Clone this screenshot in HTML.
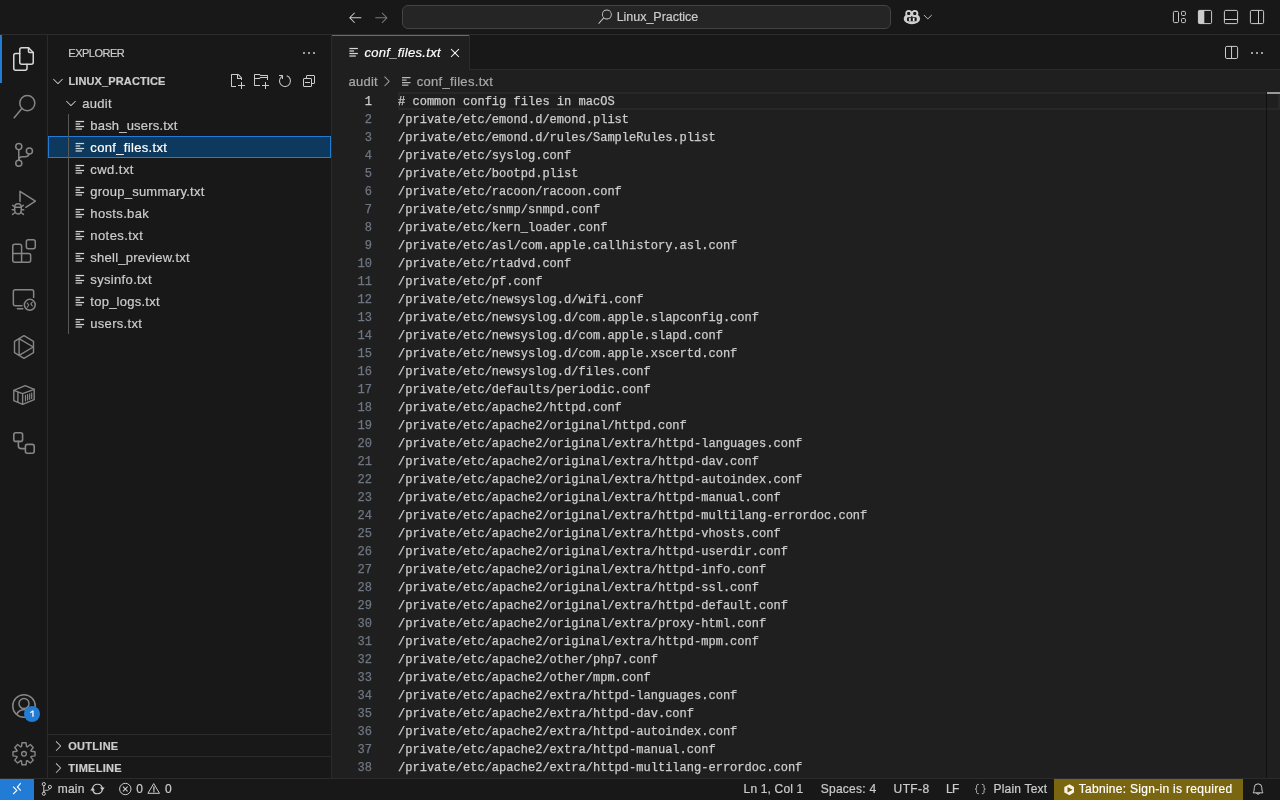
<!DOCTYPE html>
<html>
<head>
<meta charset="utf-8">
<title>conf_files.txt - Linux_Practice</title>
<style>
*{box-sizing:border-box;margin:0;padding:0}
html,body{width:1280px;height:800px;overflow:hidden;background:#181818;font-family:"Liberation Sans",sans-serif;font-size:13px;color:#cccccc}
svg{display:block;overflow:visible;position:absolute}
.t{position:absolute;white-space:pre;-webkit-text-stroke:0.2px currentColor}
.box{position:absolute}
#title{position:absolute;left:0;top:0;width:1280px;height:35px;background:#181818;border-bottom:1px solid #2b2b2b}
#cmd{position:absolute;left:402px;top:5px;width:489px;height:24px;background:#252525;border:1px solid #434343;border-radius:6px}
#act{position:absolute;left:0;top:35px;width:48px;height:743px;background:#181818;border-right:1px solid #2b2b2b}
#side{position:absolute;left:48px;top:35px;width:284px;height:743px;background:#181818;border-right:1px solid #2b2b2b}
#tabs{position:absolute;left:332px;top:35px;width:948px;height:35px;background:#181818;border-bottom:1px solid #2b2b2b}
#tab{position:absolute;left:0;top:0;width:138px;height:35px;background:#1f1f1f;border-right:1px solid #2b2b2b}
#tab i{position:absolute;left:0;top:0;width:137px;height:1px;background:#227bd5}
#crumbs{position:absolute;left:332px;top:70px;width:948px;height:22px;background:#1f1f1f}
#ed{position:absolute;left:332px;top:92px;width:948px;height:686px;background:#1f1f1f;overflow:hidden}
#ed pre{position:absolute;top:0.6px;will-change:transform;-webkit-text-stroke:0.25px currentColor;margin:0;font-family:"Liberation Mono",monospace;font-size:12.04px;line-height:18px;white-space:pre}
#nums{left:0;width:40px;text-align:right;color:#6e7681}
#nums b{font-weight:normal;color:#cccccc}
#code{left:66px;color:#cccccc}
#txt{position:absolute;left:0;top:0;width:1280px;height:800px;will-change:transform}
#status{position:absolute;left:0;top:778px;width:1280px;height:22px;background:#181818;border-top:1px solid #2b2b2b}
</style>
</head>
<body>
<div id="title"><div id="cmd"></div></div>
<div id="act"></div>
<div id="side"></div>
<div id="tabs"><div id="tab"><i></i></div></div>
<div id="crumbs"></div>
<div id="ed"><div class="box" style="left:66px;top:0;width:882px;height:18px;border:2px solid #282828"></div><div class="box" style="left:934px;top:0;width:1px;height:686px;background:#111111"></div><div class="box" style="left:935px;top:0.4px;width:13px;height:1.8px;background:#9a9a9a"></div><pre id="nums"><b>1</b>
2
3
4
5
6
7
8
9
10
11
12
13
14
15
16
17
18
19
20
21
22
23
24
25
26
27
28
29
30
31
32
33
34
35
36
37
38
39</pre><pre id="code"># common config files in macOS
/private/etc/emond.d/emond.plist
/private/etc/emond.d/rules/SampleRules.plist
/private/etc/syslog.conf
/private/etc/bootpd.plist
/private/etc/racoon/racoon.conf
/private/etc/snmp/snmpd.conf
/private/etc/kern_loader.conf
/private/etc/asl/com.apple.callhistory.asl.conf
/private/etc/rtadvd.conf
/private/etc/pf.conf
/private/etc/newsyslog.d/wifi.conf
/private/etc/newsyslog.d/com.apple.slapconfig.conf
/private/etc/newsyslog.d/com.apple.slapd.conf
/private/etc/newsyslog.d/com.apple.xscertd.conf
/private/etc/newsyslog.d/files.conf
/private/etc/defaults/periodic.conf
/private/etc/apache2/httpd.conf
/private/etc/apache2/original/httpd.conf
/private/etc/apache2/original/extra/httpd-languages.conf
/private/etc/apache2/original/extra/httpd-dav.conf
/private/etc/apache2/original/extra/httpd-autoindex.conf
/private/etc/apache2/original/extra/httpd-manual.conf
/private/etc/apache2/original/extra/httpd-multilang-errordoc.conf
/private/etc/apache2/original/extra/httpd-vhosts.conf
/private/etc/apache2/original/extra/httpd-userdir.conf
/private/etc/apache2/original/extra/httpd-info.conf
/private/etc/apache2/original/extra/httpd-ssl.conf
/private/etc/apache2/original/extra/httpd-default.conf
/private/etc/apache2/original/extra/proxy-html.conf
/private/etc/apache2/original/extra/httpd-mpm.conf
/private/etc/apache2/other/php7.conf
/private/etc/apache2/other/mpm.conf
/private/etc/apache2/extra/httpd-languages.conf
/private/etc/apache2/extra/httpd-dav.conf
/private/etc/apache2/extra/httpd-autoindex.conf
/private/etc/apache2/extra/httpd-manual.conf
/private/etc/apache2/extra/httpd-multilang-errordoc.conf
/private/etc/apache2/extra/httpd-ssl.conf</pre></div>
<div id="status"></div>
<div class="box" style="left:0px;top:35px;width:2px;height:48px;background:#227bd5;"></div>
<div class="box" style="left:48px;top:136px;width:283px;height:22px;background:#0c395d;border:1px solid #227bd5;"></div>
<div class="box" style="left:48px;top:734px;width:283px;height:1px;background:#2b2b2b;"></div>
<div class="box" style="left:48px;top:756px;width:283px;height:1px;background:#2b2b2b;"></div>
<div class="box" style="left:0px;top:779px;width:34px;height:21px;background:#227bd5;"></div>
<div class="box" style="left:1054px;top:779px;width:189px;height:21px;background:#7a6510;"></div>
<div id="txt"><span class="t" style="left:616.7px;top:5.60px;height:22px;line-height:22px;font-size:12.5px;color:#cccccc;letter-spacing:-0.031px;">Linux_Practice</span>
<span class="t" style="left:68.3px;top:42.40px;height:22px;line-height:22px;font-size:11px;color:#cccccc;letter-spacing:-0.489px;">EXPLORER</span>
<span class="t" style="left:68.4px;top:69.80px;height:22px;line-height:22px;font-size:11px;color:#cccccc;font-weight:bold;letter-spacing:0.127px;">LINUX_PRACTICE</span>
<span class="t" style="left:82.2px;top:92.80px;height:22px;line-height:22px;font-size:13px;color:#cccccc;letter-spacing:0.299px;">audit</span>
<span class="t" style="left:90.3px;top:114.80px;height:22px;line-height:22px;font-size:13px;color:#cccccc;letter-spacing:0.189px;">bash_users.txt</span>
<span class="t" style="left:90.3px;top:136.80px;height:22px;line-height:22px;font-size:13px;color:#ffffff;letter-spacing:0.333px;">conf_files.txt</span>
<span class="t" style="left:90.3px;top:158.80px;height:22px;line-height:22px;font-size:13px;color:#cccccc;letter-spacing:0.455px;">cwd.txt</span>
<span class="t" style="left:90.3px;top:180.80px;height:22px;line-height:22px;font-size:13px;color:#cccccc;letter-spacing:0.231px;">group_summary.txt</span>
<span class="t" style="left:90.3px;top:202.80px;height:22px;line-height:22px;font-size:13px;color:#cccccc;letter-spacing:0.355px;">hosts.bak</span>
<span class="t" style="left:90.3px;top:224.80px;height:22px;line-height:22px;font-size:13px;color:#cccccc;letter-spacing:0.420px;">notes.txt</span>
<span class="t" style="left:90.3px;top:246.80px;height:22px;line-height:22px;font-size:13px;color:#cccccc;letter-spacing:0.251px;">shell_preview.txt</span>
<span class="t" style="left:90.3px;top:268.80px;height:22px;line-height:22px;font-size:13px;color:#cccccc;letter-spacing:0.340px;">sysinfo.txt</span>
<span class="t" style="left:90.3px;top:290.80px;height:22px;line-height:22px;font-size:13px;color:#cccccc;letter-spacing:0.255px;">top_logs.txt</span>
<span class="t" style="left:90.3px;top:312.80px;height:22px;line-height:22px;font-size:13px;color:#cccccc;letter-spacing:0.297px;">users.txt</span>
<span class="t" style="left:68.3px;top:734.70px;height:22px;line-height:22px;font-size:11px;color:#cccccc;font-weight:bold;letter-spacing:0.270px;">OUTLINE</span>
<span class="t" style="left:68.3px;top:756.70px;height:22px;line-height:22px;font-size:11px;color:#cccccc;font-weight:bold;letter-spacing:0.279px;">TIMELINE</span>
<span class="t" style="left:364.4px;top:42.30px;height:22px;line-height:22px;font-size:13px;color:#ffffff;font-style:italic;letter-spacing:0.303px;">conf_files.txt</span>
<span class="t" style="left:348.4px;top:70.80px;height:22px;line-height:22px;font-size:13px;color:#a9a9a9;letter-spacing:0.274px;">audit</span>
<span class="t" style="left:416.7px;top:70.80px;height:22px;line-height:22px;font-size:13px;color:#a9a9a9;letter-spacing:0.310px;">conf_files.txt</span>
<span class="t" style="left:57.8px;top:778.20px;height:22px;line-height:22px;font-size:12px;color:#cccccc;letter-spacing:0.195px;">main</span>
<span class="t" style="left:136.2px;top:778.20px;height:22px;line-height:22px;font-size:12px;color:#cccccc;">0</span>
<span class="t" style="left:165px;top:778.20px;height:22px;line-height:22px;font-size:12px;color:#cccccc;">0</span>
<span class="t" style="left:743.6px;top:778.20px;height:22px;line-height:22px;font-size:12px;color:#cccccc;letter-spacing:0.165px;">Ln 1, Col 1</span>
<span class="t" style="left:820.8px;top:778.20px;height:22px;line-height:22px;font-size:12px;color:#cccccc;letter-spacing:0.241px;">Spaces: 4</span>
<span class="t" style="left:893.6px;top:778.20px;height:22px;line-height:22px;font-size:12px;color:#cccccc;letter-spacing:0.375px;">UTF-8</span>
<span class="t" style="left:946.1px;top:778.20px;height:22px;line-height:22px;font-size:12px;color:#cccccc;letter-spacing:-0.816px;">LF</span>
<span class="t" style="left:993.6px;top:778.20px;height:22px;line-height:22px;font-size:12px;color:#cccccc;letter-spacing:0.176px;">Plain Text</span>
<span class="t" style="left:1078.7px;top:778.20px;height:22px;line-height:22px;font-size:12px;color:#ffffff;letter-spacing:0.295px;">Tabnine: Sign-in is required</span></div>
<svg id="icons" width="1280" height="800" viewBox="0 0 1280 800" style="left:0;top:0"><path d="M21.75 47.75H28.5L33.25 52.5V62.25a2 2 0 0 1-2 2H21.75a2 2 0 0 1-2-2V49.75a2 2 0 0 1 2-2Z" fill="none" stroke="#d7d7d7" stroke-width="1.5" stroke-linecap="round" stroke-linejoin="round" />
<path d="M28.5 47.75V51.5a1 1 0 0 0 1 1H33.25" fill="none" stroke="#d7d7d7" stroke-width="1.5" stroke-linecap="round" stroke-linejoin="round" />
<path d="M19.75 53.5H15.75a2 2 0 0 0-2 2V68.25a2 2 0 0 0 2 2H25a2 2 0 0 0 2-2V64.25" fill="none" stroke="#d7d7d7" stroke-width="1.5" stroke-linecap="round" stroke-linejoin="round" />
<circle cx="27.3" cy="103.1" r="7.55" fill="none" stroke="#868686" stroke-width="1.5"/>
<path d="M21.9 108.4L14.2 117.8" fill="none" stroke="#868686" stroke-width="1.5" stroke-linecap="round" stroke-linejoin="round" />
<circle cx="18.8" cy="146.6" r="3.05" fill="none" stroke="#868686" stroke-width="1.5"/>
<circle cx="29.4" cy="151" r="3.05" fill="none" stroke="#868686" stroke-width="1.5"/>
<circle cx="18.8" cy="163.2" r="3.05" fill="none" stroke="#868686" stroke-width="1.5"/>
<path d="M18.8 149.7V160.1" fill="none" stroke="#868686" stroke-width="1.5" stroke-linecap="round" stroke-linejoin="round" />
<path d="M29 154.1C28.5 156 27 156.75 25 156.75H22.5C20.5 156.75 18.8 158 18.8 160.1" fill="none" stroke="#868686" stroke-width="1.5" stroke-linecap="round" stroke-linejoin="round" />
<path d="M20 201.6V191.3L35.4 201.2L25.8 207.3" fill="none" stroke="#868686" stroke-width="1.5" stroke-linecap="round" stroke-linejoin="round" />
<path d="M14.7 207.3C14.7 202.6 21.3 202.6 21.3 207.3V210.3C21.3 215.2 14.7 215.2 14.7 210.3Z" fill="none" stroke="#868686" stroke-width="1.5" stroke-linecap="round" stroke-linejoin="round" />
<path d="M14.7 207.3H21.3" fill="none" stroke="#868686" stroke-width="1.4" stroke-linecap="round" stroke-linejoin="round" />
<path d="M12.6 205.3L14.6 206.9 M12.2 209.7H14.6 M12.5 214.4L14.8 212.7 M23.4 205.3L21.4 206.9 M23.8 209.7H21.4 M23.5 214.4L21.2 212.7" fill="none" stroke="#868686" stroke-width="1.4" stroke-linecap="round" stroke-linejoin="round" />
<path d="M14.75 244.15H19.6a2 2 0 0 1 2 2V253.4H28.65a2 2 0 0 1 2 2V260.25a2 2 0 0 1-2 2H14.75a2 2 0 0 1-2-2V246.15a2 2 0 0 1 2-2Z" fill="none" stroke="#868686" stroke-width="1.5" stroke-linecap="round" stroke-linejoin="round" />
<path d="M12.75 253.4H21.6V262.25" fill="none" stroke="#868686" stroke-width="1.5" stroke-linecap="round" stroke-linejoin="round" />
<rect x="26.35" y="239.75" width="8.9" height="8.9" rx="2" fill="none" stroke="#868686" stroke-width="1.5"/>
<path d="M33.65 297.6V291.75a2 2 0 0 0-2-2H15.35a2 2 0 0 0-2 2V303.65a2 2 0 0 0 2 2H22" fill="none" stroke="#868686" stroke-width="1.5" stroke-linecap="round" stroke-linejoin="round" />
<path d="M17.4 308.8H22.8" fill="none" stroke="#868686" stroke-width="1.5" stroke-linecap="round" stroke-linejoin="round" />
<circle cx="29.8" cy="304.8" r="5.45" fill="none" stroke="#868686" stroke-width="1.5"/>
<path d="M27.2 303.2L28.8 305L27.2 307.2 M32.3 302.2L30.8 303.9L32.3 305.8" fill="none" stroke="#868686" stroke-width="1.1" stroke-linecap="round" stroke-linejoin="round" />
<path d="M24 335.7L33.5 341.3V352.7L24 358.3L14.5 352.7V341.3Z" fill="none" stroke="#868686" stroke-width="1.4" stroke-linecap="round" stroke-linejoin="round" />
<path d="M19.1 338.6V355.4L33.2 347Z" fill="none" stroke="#868686" stroke-width="1.4" stroke-linecap="round" stroke-linejoin="round" />
<path d="M25.2 385.7L34.2 389.3V399.6L22.6 404.3L13.8 400.7V390.4Z" fill="none" stroke="#868686" stroke-width="1.4" stroke-linecap="round" stroke-linejoin="round" />
<path d="M13.8 390.4L22.6 393.7L34.2 389.3 M22.6 393.7V404.3 M17.9 392V402.3" fill="none" stroke="#868686" stroke-width="1.4" stroke-linecap="round" stroke-linejoin="round" />
<path d="M25.5 395.4V400.8 M27.6 394.6V400 M29.7 393.8V399.2 M31.7 393V398.4" fill="none" stroke="#868686" stroke-width="1.2" stroke-linecap="round" stroke-linejoin="round" />
<rect x="13.8" y="432.8" width="8.8" height="8.6" rx="2" fill="none" stroke="#868686" stroke-width="1.6"/>
<rect x="25.4" y="444.4" width="8.8" height="8.8" rx="2" fill="none" stroke="#868686" stroke-width="1.6"/>
<path d="M18.4 441.4V446.1a2.5 2.5 0 0 0 2.5 2.5H25.4" fill="none" stroke="#868686" stroke-width="1.6" stroke-linecap="round" stroke-linejoin="round" />
<circle cx="24" cy="706" r="11.25" fill="none" stroke="#868686" stroke-width="1.5"/>
<circle cx="24" cy="703.6" r="5" fill="none" stroke="#868686" stroke-width="1.5"/>
<path d="M16.6 714.3A8.2 8.2 0 0 1 31.4 714.3" fill="none" stroke="#868686" stroke-width="1.5" stroke-linecap="round" stroke-linejoin="round" />
<circle cx="32" cy="714" r="8" fill="#227bd5" stroke="none" stroke-width="0"/>
<path d="M30 712.2L32.5 710.4H33.6V716.8H32.3V712L30.5 713.3Z" fill="#ffffff" fill-rule="evenodd" />
<path d="M21.46 746.64L21.96 742.79L26.04 742.79L26.54 746.64L27.27 746.94L30.34 744.57L33.23 747.46L30.86 750.53L31.16 751.26L35.01 751.76L35.01 755.84L31.16 756.34L30.86 757.07L33.23 760.14L30.34 763.03L27.27 760.66L26.54 760.96L26.04 764.81L21.96 764.81L21.46 760.96L20.73 760.66L17.66 763.03L14.77 760.14L17.14 757.07L16.84 756.34L12.99 755.84L12.99 751.76L16.84 751.26L17.14 750.53L14.77 747.46L17.66 744.57L20.73 746.94Z" fill="none" stroke="#868686" stroke-width="1.4" stroke-linecap="round" stroke-linejoin="round" stroke-linejoin="miter"/>
<circle cx="24" cy="753.8" r="2.35" fill="none" stroke="#868686" stroke-width="1.4"/>
<path d="M4 8a1 1 0 1 1-2 0 1 1 0 0 1 2 0zm5 0a1 1 0 1 1-2 0 1 1 0 0 1 2 0zm5 0a1 1 0 1 1-2 0 1 1 0 0 1 2 0z" fill="#cccccc" fill-rule="evenodd" transform="translate(301 45) scale(1)" />
<path d="M7.976 10.072l4.357-4.357.62.618L8.284 11h-.618L3 6.333l.619-.618 4.357 4.357z" fill="#cccccc" fill-rule="evenodd" transform="translate(50 73) scale(1)" />
<path d="M7.976 10.072l4.357-4.357.62.618L8.284 11h-.618L3 6.333l.619-.618 4.357 4.357z" fill="#cccccc" fill-rule="evenodd" transform="translate(63 95) scale(1)" />
<path d="M9.5 1.1l3.4 3.5.1.4v2h-1V6H8V2H3v11h4v1H2.5l-.5-.5v-12l.5-.5h6.7l.3.1zM9 2v3h2.9L9 2zm4 14h-1v-3H9v-1h3V9h1v3h3v1h-3v3z" fill="#cccccc" fill-rule="evenodd" transform="translate(229 73) scale(1)" />
<path d="M14.5 2H7.71l-.85-.85L6.51 1h-5l-.5.5v11l.5.5H7v-1H1.99V6h4.49l.35-.15.86-.86H14v1.5l-.001.51h1.011V2.5L14.5 2zm-.51 2h-6.5l-.35.15-.86.86H2v-3h4.29l.85.85.36.15H14l-.01.99zM13 16h-1v-3H9v-1h3V9h1v3h3v1h-3v3z" fill="#cccccc" fill-rule="evenodd" transform="translate(253 73) scale(1)" />
<path d="M4.681 3H2V2h3.5l.5.5V6H5V4a5 5 0 1 0 4.53-.761l.302-.954A6 6 0 1 1 4.681 3z" fill="#cccccc" fill-rule="evenodd" transform="translate(277 73) scale(1)" />
<path d="M9 9H4v1h5V9z M5 3l1-1h7l1 1v7l-1 1h-2v2l-1 1H3l-1-1V6l1-1h2V3zm1 2h4l1 1v4h2V3H6v2zm4 1H3v7h7V6z" fill="#cccccc" fill-rule="evenodd" transform="translate(301 73) scale(1)" />
<rect x="68" y="114" width="1" height="220" rx="0" fill="#585858" stroke="none" stroke-width="1"/>
<rect x="75.6" y="120.9" width="8.5" height="1.25" rx="0" fill="#d4d7d6" stroke="none" stroke-width="1"/>
<rect x="75.6" y="123.4" width="4.6" height="1.25" rx="0" fill="#d4d7d6" stroke="none" stroke-width="1"/>
<rect x="75.6" y="125.9" width="8.5" height="1.25" rx="0" fill="#d4d7d6" stroke="none" stroke-width="1"/>
<rect x="75.6" y="128.4" width="6.4" height="1.25" rx="0" fill="#d4d7d6" stroke="none" stroke-width="1"/>
<rect x="75.6" y="142.9" width="8.5" height="1.25" rx="0" fill="#d4d7d6" stroke="none" stroke-width="1"/>
<rect x="75.6" y="145.4" width="4.6" height="1.25" rx="0" fill="#d4d7d6" stroke="none" stroke-width="1"/>
<rect x="75.6" y="147.9" width="8.5" height="1.25" rx="0" fill="#d4d7d6" stroke="none" stroke-width="1"/>
<rect x="75.6" y="150.4" width="6.4" height="1.25" rx="0" fill="#d4d7d6" stroke="none" stroke-width="1"/>
<rect x="75.6" y="164.9" width="8.5" height="1.25" rx="0" fill="#d4d7d6" stroke="none" stroke-width="1"/>
<rect x="75.6" y="167.4" width="4.6" height="1.25" rx="0" fill="#d4d7d6" stroke="none" stroke-width="1"/>
<rect x="75.6" y="169.9" width="8.5" height="1.25" rx="0" fill="#d4d7d6" stroke="none" stroke-width="1"/>
<rect x="75.6" y="172.4" width="6.4" height="1.25" rx="0" fill="#d4d7d6" stroke="none" stroke-width="1"/>
<rect x="75.6" y="186.9" width="8.5" height="1.25" rx="0" fill="#d4d7d6" stroke="none" stroke-width="1"/>
<rect x="75.6" y="189.4" width="4.6" height="1.25" rx="0" fill="#d4d7d6" stroke="none" stroke-width="1"/>
<rect x="75.6" y="191.9" width="8.5" height="1.25" rx="0" fill="#d4d7d6" stroke="none" stroke-width="1"/>
<rect x="75.6" y="194.4" width="6.4" height="1.25" rx="0" fill="#d4d7d6" stroke="none" stroke-width="1"/>
<rect x="75.6" y="208.9" width="8.5" height="1.25" rx="0" fill="#d4d7d6" stroke="none" stroke-width="1"/>
<rect x="75.6" y="211.4" width="4.6" height="1.25" rx="0" fill="#d4d7d6" stroke="none" stroke-width="1"/>
<rect x="75.6" y="213.9" width="8.5" height="1.25" rx="0" fill="#d4d7d6" stroke="none" stroke-width="1"/>
<rect x="75.6" y="216.4" width="6.4" height="1.25" rx="0" fill="#d4d7d6" stroke="none" stroke-width="1"/>
<rect x="75.6" y="230.9" width="8.5" height="1.25" rx="0" fill="#d4d7d6" stroke="none" stroke-width="1"/>
<rect x="75.6" y="233.4" width="4.6" height="1.25" rx="0" fill="#d4d7d6" stroke="none" stroke-width="1"/>
<rect x="75.6" y="235.9" width="8.5" height="1.25" rx="0" fill="#d4d7d6" stroke="none" stroke-width="1"/>
<rect x="75.6" y="238.4" width="6.4" height="1.25" rx="0" fill="#d4d7d6" stroke="none" stroke-width="1"/>
<rect x="75.6" y="252.9" width="8.5" height="1.25" rx="0" fill="#d4d7d6" stroke="none" stroke-width="1"/>
<rect x="75.6" y="255.4" width="4.6" height="1.25" rx="0" fill="#d4d7d6" stroke="none" stroke-width="1"/>
<rect x="75.6" y="257.9" width="8.5" height="1.25" rx="0" fill="#d4d7d6" stroke="none" stroke-width="1"/>
<rect x="75.6" y="260.4" width="6.4" height="1.25" rx="0" fill="#d4d7d6" stroke="none" stroke-width="1"/>
<rect x="75.6" y="274.9" width="8.5" height="1.25" rx="0" fill="#d4d7d6" stroke="none" stroke-width="1"/>
<rect x="75.6" y="277.4" width="4.6" height="1.25" rx="0" fill="#d4d7d6" stroke="none" stroke-width="1"/>
<rect x="75.6" y="279.9" width="8.5" height="1.25" rx="0" fill="#d4d7d6" stroke="none" stroke-width="1"/>
<rect x="75.6" y="282.4" width="6.4" height="1.25" rx="0" fill="#d4d7d6" stroke="none" stroke-width="1"/>
<rect x="75.6" y="296.9" width="8.5" height="1.25" rx="0" fill="#d4d7d6" stroke="none" stroke-width="1"/>
<rect x="75.6" y="299.4" width="4.6" height="1.25" rx="0" fill="#d4d7d6" stroke="none" stroke-width="1"/>
<rect x="75.6" y="301.9" width="8.5" height="1.25" rx="0" fill="#d4d7d6" stroke="none" stroke-width="1"/>
<rect x="75.6" y="304.4" width="6.4" height="1.25" rx="0" fill="#d4d7d6" stroke="none" stroke-width="1"/>
<rect x="75.6" y="318.9" width="8.5" height="1.25" rx="0" fill="#d4d7d6" stroke="none" stroke-width="1"/>
<rect x="75.6" y="321.4" width="4.6" height="1.25" rx="0" fill="#d4d7d6" stroke="none" stroke-width="1"/>
<rect x="75.6" y="323.9" width="8.5" height="1.25" rx="0" fill="#d4d7d6" stroke="none" stroke-width="1"/>
<rect x="75.6" y="326.4" width="6.4" height="1.25" rx="0" fill="#d4d7d6" stroke="none" stroke-width="1"/>
<path d="M10.072 8.024L5.715 3.667l.618-.62L11 7.716v.618L6.333 13l-.618-.619 4.357-4.357z" fill="#cccccc" fill-rule="evenodd" transform="translate(50 738) scale(1)" />
<path d="M10.072 8.024L5.715 3.667l.618-.62L11 7.716v.618L6.333 13l-.618-.619 4.357-4.357z" fill="#cccccc" fill-rule="evenodd" transform="translate(50 760) scale(1)" />
<path d="M7 3.093l-5 5V8.8l5 5 .707-.707-4.146-4.147H14v-1H3.56L7.707 3.8 7 3.093z" fill="#cccccc" fill-rule="evenodd" transform="translate(347.3 9.3) scale(1)" />
<path d="M9 13.887l5-5V8.18l-5-5-.707.707 4.146 4.147H2v1h10.44L8.293 13.18l.707.707z" fill="#777777" fill-rule="evenodd" transform="translate(373.3 9.3) scale(1)" />
<path d="M15.25 0a8.25 8.25 0 0 0-6.18 13.72L1 22.88l1.12 1 8.05-9.12A8.251 8.251 0 1 0 15.25.01V0zm0 15a6.75 6.75 0 1 1 0-13.5 6.75 6.75 0 0 1 0 13.5z" fill="#cccccc" fill-rule="evenodd" transform="translate(597.7 9.6) scale(0.6)" />
<rect x="349.4" y="47.9" width="8.5" height="1.25" rx="0" fill="#d4d7d6" stroke="none" stroke-width="1"/>
<rect x="349.4" y="50.4" width="4.6" height="1.25" rx="0" fill="#d4d7d6" stroke="none" stroke-width="1"/>
<rect x="349.4" y="52.9" width="8.5" height="1.25" rx="0" fill="#d4d7d6" stroke="none" stroke-width="1"/>
<rect x="349.4" y="55.4" width="6.4" height="1.25" rx="0" fill="#d4d7d6" stroke="none" stroke-width="1"/>
<path d="M8 8.707l3.646 3.647.708-.707L8.707 8l3.647-3.646-.707-.708L8 7.293 4.354 3.646l-.707.708L7.293 8l-3.646 3.646.707.708L8 8.707z" fill="#ffffff" fill-rule="evenodd" transform="translate(447 45) scale(1)" />
<path d="M10.072 8.024L5.715 3.667l.618-.62L11 7.716v.618L6.333 13l-.618-.619 4.357-4.357z" fill="#a9a9a9" fill-rule="evenodd" transform="translate(378.5 73.3) scale(1)" />
<rect x="402" y="77.0" width="8.5" height="1.25" rx="0" fill="#b9bbba" stroke="none" stroke-width="1"/>
<rect x="402" y="79.5" width="4.6" height="1.25" rx="0" fill="#b9bbba" stroke="none" stroke-width="1"/>
<rect x="402" y="82.0" width="8.5" height="1.25" rx="0" fill="#b9bbba" stroke="none" stroke-width="1"/>
<rect x="402" y="84.5" width="6.4" height="1.25" rx="0" fill="#b9bbba" stroke="none" stroke-width="1"/>
<ellipse cx="911.9" cy="18.7" rx="8.2" ry="5.5" fill="#d0d0d0"/>
<circle cx="908.8" cy="13.5" r="3.5" fill="#d0d0d0" stroke="none" stroke-width="0"/>
<circle cx="914.8" cy="13.5" r="3.5" fill="#d0d0d0" stroke="none" stroke-width="0"/>
<rect x="907.15" y="12.0" width="3.1" height="2.9" rx="0.9" fill="#181818" stroke="none" stroke-width="1"/>
<rect x="913.2" y="12.0" width="3.1" height="2.9" rx="0.9" fill="#181818" stroke="none" stroke-width="1"/>
<rect x="911.2" y="15.9" width="1.2" height="1.6" rx="0.3" fill="#181818" stroke="none" stroke-width="1"/>
<rect x="907" y="17.2" width="9.7" height="4.1" rx="1.2" fill="#181818" stroke="none" stroke-width="1"/>
<rect x="908.9" y="17.9" width="1.9" height="3.1" rx="0.4" fill="#d0d0d0" stroke="none" stroke-width="1"/>
<rect x="912.8" y="17.9" width="1.8" height="3.1" rx="0.4" fill="#e8e8e8" stroke="none" stroke-width="1"/>
<path d="M924.2 15.3L927.8 18.9L931.5 15.3" fill="none" stroke="#bbbbbb" stroke-width="1.0" stroke-linecap="round" stroke-linejoin="round" />
<rect x="1173.4" y="11.4" width="5.1" height="11.2" rx="1.2" fill="none" stroke="#cccccc" stroke-width="1"/>
<rect x="1181.5" y="11.4" width="3.9" height="4.1" rx="1" fill="none" stroke="#cccccc" stroke-width="1"/>
<rect x="1181.5" y="18.5" width="3.9" height="4.1" rx="1" fill="none" stroke="#cccccc" stroke-width="1"/>
<rect x="1198.4" y="10.4" width="13.2" height="13.2" rx="1.3" fill="none" stroke="#cccccc" stroke-width="1"/>
<path d="M1199.4 10.2H1204.3V23.8H1199.4a1.2 1.2 0 0 1-1.2-1.2V11.4a1.2 1.2 0 0 1 1.2-1.2Z" fill="#cccccc" fill-rule="evenodd" />
<rect x="1224.4" y="10.4" width="13.2" height="13.2" rx="1.3" fill="none" stroke="#cccccc" stroke-width="1"/>
<path d="M1224.4 19.5H1237.6" fill="none" stroke="#cccccc" stroke-width="1" stroke-linecap="round" stroke-linejoin="round" />
<rect x="1250.4" y="10.4" width="13.2" height="13.2" rx="1.3" fill="none" stroke="#cccccc" stroke-width="1"/>
<path d="M1258.5 10.4V23.6" fill="none" stroke="#cccccc" stroke-width="1" stroke-linecap="round" stroke-linejoin="round" />
<rect x="1225.5" y="46.4" width="12.1" height="12.1" rx="1.4" fill="none" stroke="#cccccc" stroke-width="1"/>
<path d="M1231.55 46.4V58.5" fill="none" stroke="#cccccc" stroke-width="1" stroke-linecap="round" stroke-linejoin="round" />
<path d="M4 8a1 1 0 1 1-2 0 1 1 0 0 1 2 0zm5 0a1 1 0 1 1-2 0 1 1 0 0 1 2 0zm5 0a1 1 0 1 1-2 0 1 1 0 0 1 2 0z" fill="#cccccc" fill-rule="evenodd" transform="translate(1249 45) scale(1)" />
<path d="M13.1 786.6L16.8 790.4L13.1 794.1 M20.7 783.2L17.4 787L20.7 790.6" fill="none" stroke="#ffffff" stroke-width="1.15" stroke-linejoin="miter"/>
<circle cx="43.8" cy="784.1" r="1.6" fill="none" stroke="#cccccc" stroke-width="1"/>
<circle cx="49.9" cy="786.9" r="1.6" fill="none" stroke="#cccccc" stroke-width="1"/>
<circle cx="43.8" cy="793.7" r="1.6" fill="none" stroke="#cccccc" stroke-width="1"/>
<path d="M43.8 785.7V792.1 M49.7 788.5C49.4 789.8 48.4 790.3 47.2 790.3H46.3C44.9 790.3 43.8 791 43.8 792.1" fill="none" stroke="#cccccc" stroke-width="1" stroke-linecap="round" stroke-linejoin="round" />
<path d="M92.7 788.3A4.9 4.9 0 0 1 102.3 788 M102.3 789.7A4.9 4.9 0 0 1 92.7 790" fill="none" stroke="#cccccc" stroke-width="1.1" stroke-linecap="round" stroke-linejoin="round" />
<path d="M100 787.5H104.7L102.4 790.8Z" fill="#cccccc" fill-rule="evenodd" />
<path d="M90.3 790.5H95L92.6 787.2Z" fill="#cccccc" fill-rule="evenodd" />
<circle cx="125.3" cy="789" r="5.7" fill="none" stroke="#cccccc" stroke-width="1"/>
<path d="M123 786.7L127.6 791.3M127.6 786.7L123 791.3" fill="none" stroke="#cccccc" stroke-width="1.05"/>
<path d="M153.9 783.9L159.5 793.3H148.3Z" fill="none" stroke="#cccccc" stroke-width="1" stroke-linecap="round" stroke-linejoin="round" />
<path d="M153.9 787V790.3" fill="none" stroke="#cccccc" stroke-width="1.3" stroke-linecap="round" stroke-linejoin="round" />
<circle cx="153.9" cy="791.8" r="0.7" fill="#cccccc" stroke="none" stroke-width="0"/>
<path d="M978.4 784.4C977 784.4 976.6 785 976.6 786V787.7C976.6 788.5 976 789 975.3 789C976 789 976.6 789.6 976.6 790.4V792.1C976.6 793.1 977 793.7 978.4 793.7" fill="none" stroke="#b8b8b8" stroke-width="1" stroke-linecap="round" stroke-linejoin="round" />
<path d="M982.2 784.4C983.6 784.4 984 785 984 786V787.7C984 788.5 984.6 789 985.3 789C984.6 789 984 789.6 984 790.4V792.1C984 793.1 983.6 793.7 982.2 793.7" fill="none" stroke="#b8b8b8" stroke-width="1" stroke-linecap="round" stroke-linejoin="round" />
<path d="M1069.5 784.2L1074 787V792.4L1069.5 795.2L1064.3 792.4V787ZM1067.5 786.9V792.5L1072.6 789.7Z" fill="#f7f3e6" fill-rule="evenodd" />
<path d="M1253.4 792.5C1254.1 791 1254.3 789.2 1254.3 787.6A3.75 3.75 0 0 1 1261.8 787.6C1261.8 789.2 1262 791 1262.7 792.5Z" fill="none" stroke="#cccccc" stroke-width="1" stroke-linecap="round" stroke-linejoin="round" />
<path d="M1256.5 793.2A1.7 1.7 0 0 0 1259.6 793.2" fill="none" stroke="#cccccc" stroke-width="1" stroke-linecap="round" stroke-linejoin="round" /></svg>
</body>
</html>
